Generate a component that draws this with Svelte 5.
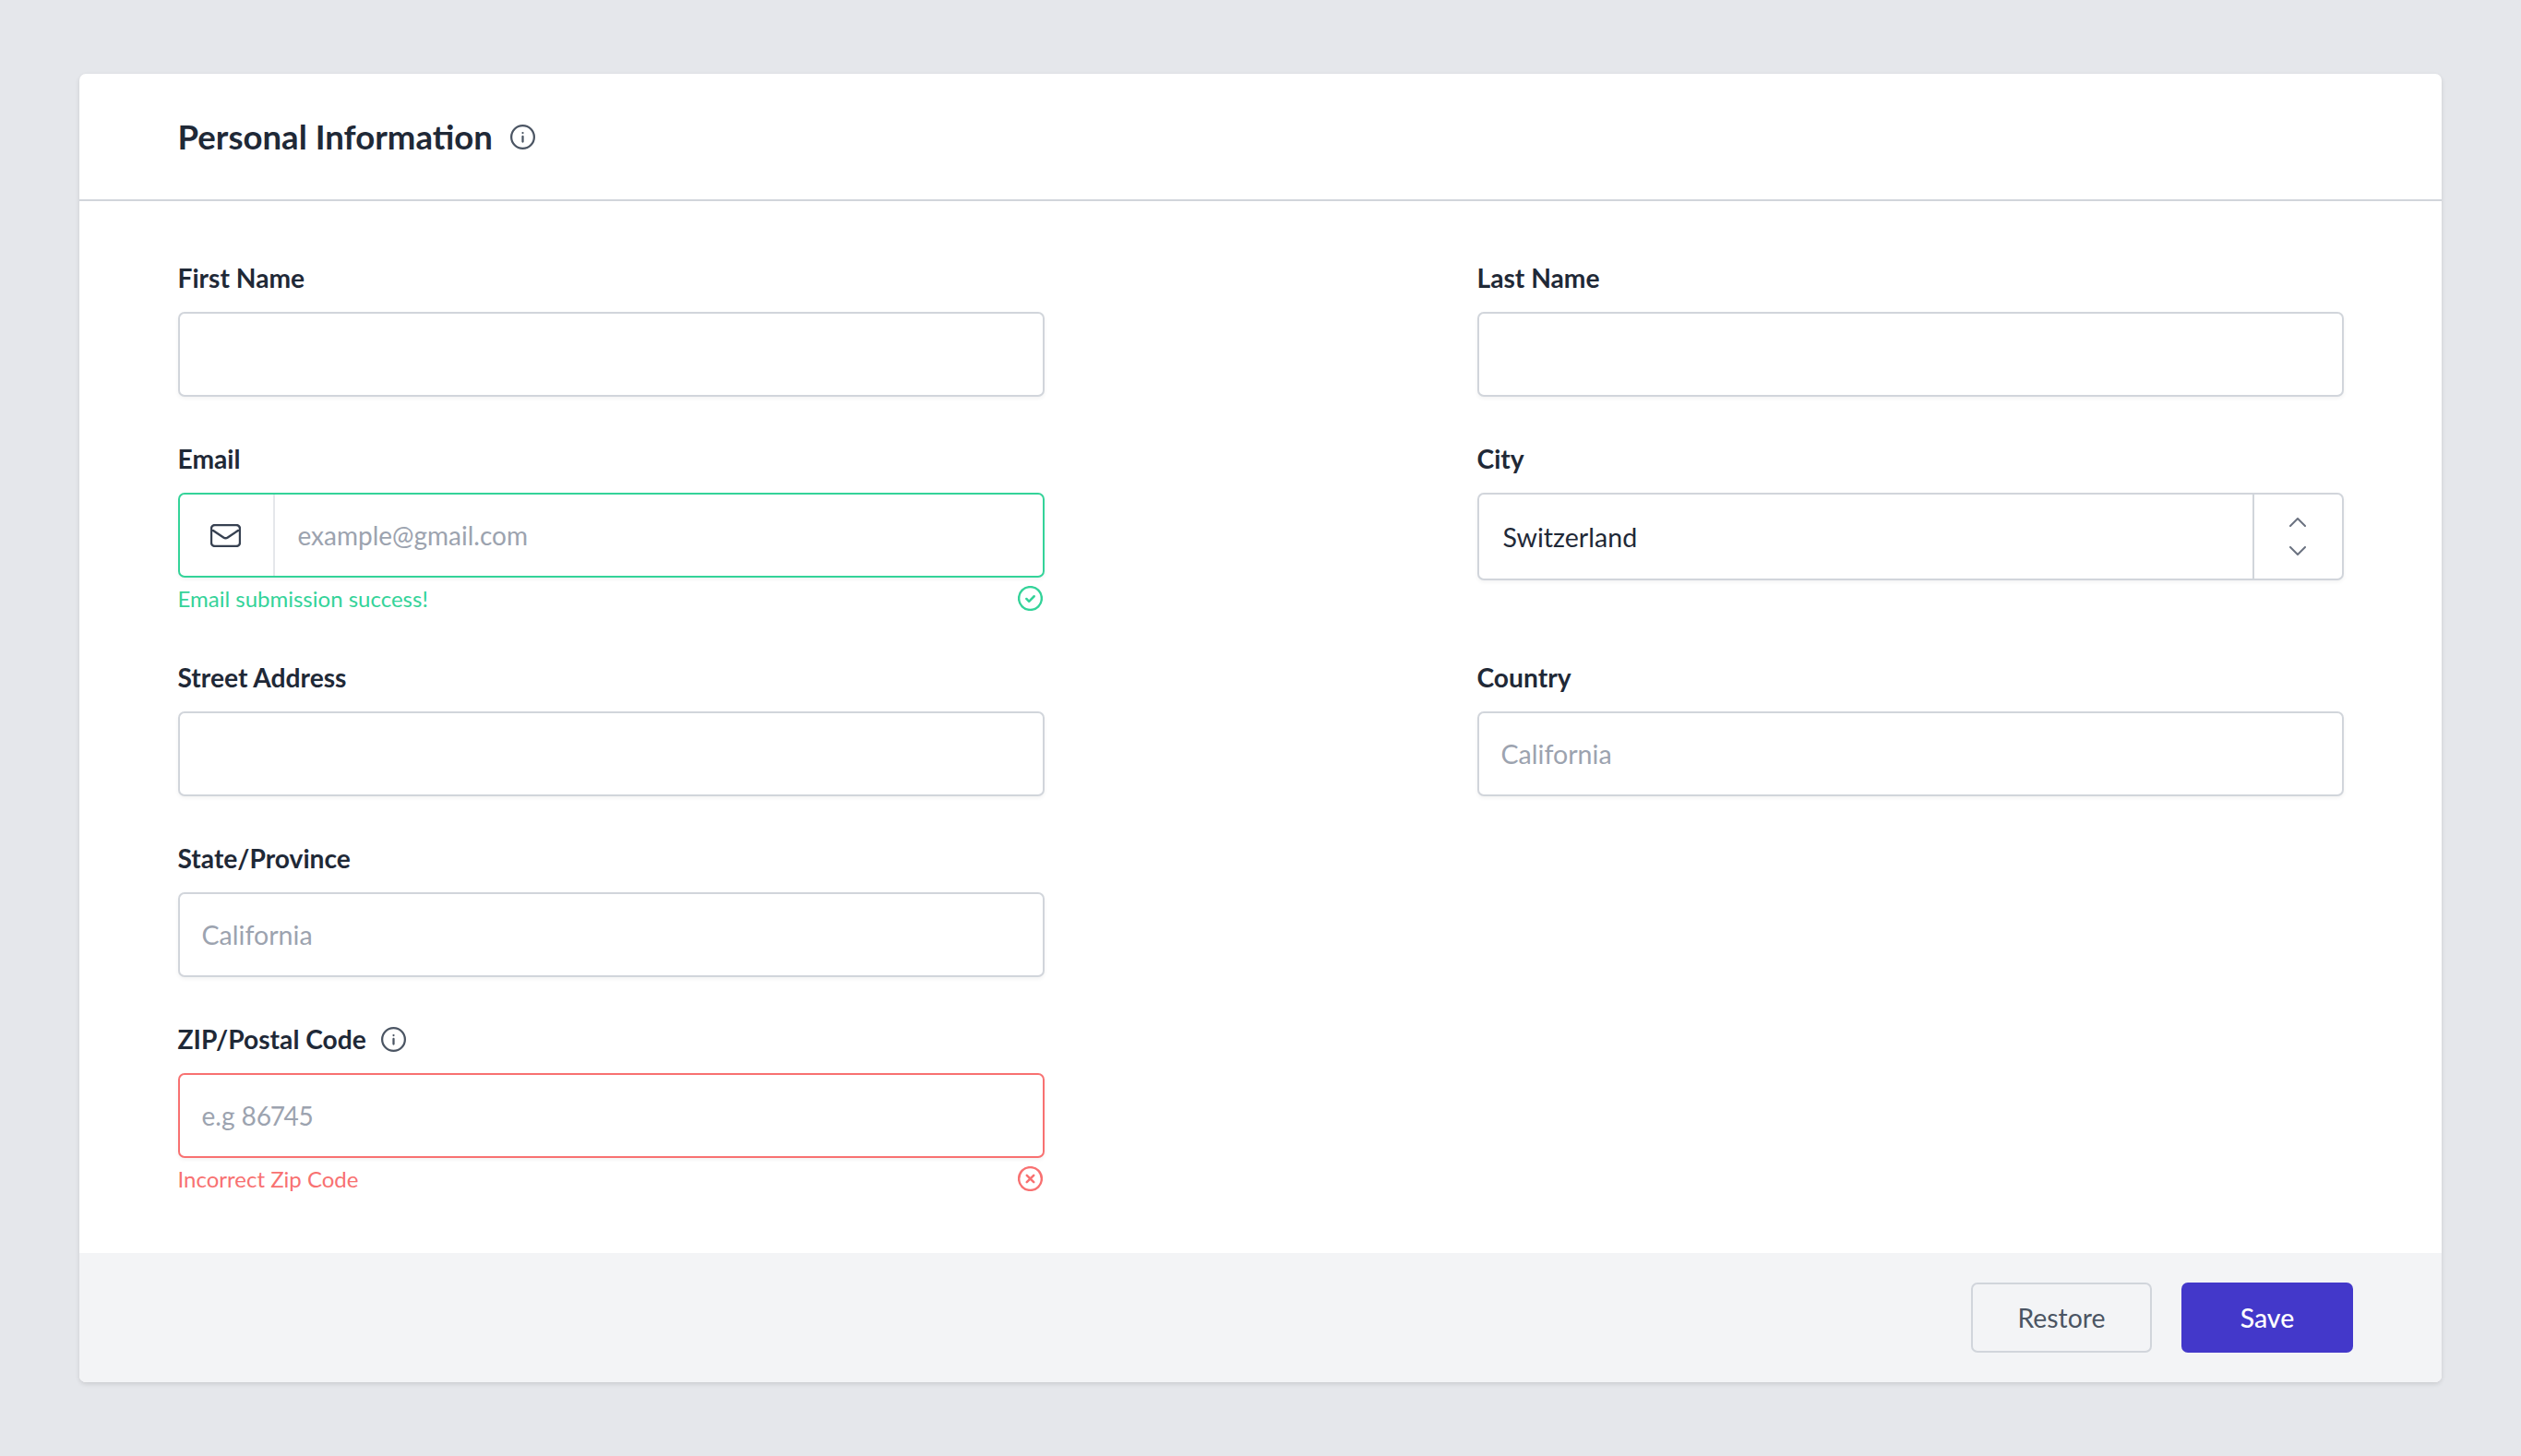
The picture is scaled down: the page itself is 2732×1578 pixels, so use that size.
<script>
  const info = "M12 16.5v-5M12 8h.01M23 12a11 11 0 11-22 0 11 11 0 0122 0z";
</script>

<div class="page">
  <form class="card">
    <header class="head">
      <h1>Personal Information</h1>
      <svg class="info" viewBox="0 0 24 24"><path d={info} /></svg>
    </header>

    <div class="body">
      <div class="field">
        <label for="first">First Name</label>
        <input id="first" class="box" />
      </div>
      <div class="field">
        <label for="last">Last Name</label>
        <input id="last" class="box" />
      </div>

      <div class="field">
        <label for="email">Email</label>
        <div class="box group ok">
          <span class="addon">
            <svg class="mail" viewBox="0 0 33 25"><path d="M3 7l11.2 7.4a4 4 0 004.6 0L30 7M5 24h23a4 4 0 004-4V5a4 4 0 00-4-4H5a4 4 0 00-4 4v15a4 4 0 004 4z" /></svg>
          </span>
          <input id="email" class="mail-input" placeholder="example@gmail.com" />
        </div>
        <div class="msg ok-text">
          <span>Email submission success!</span>
          <svg class="state" viewBox="0 0 24 24"><path d="M8.3 12.4l2.5 2.5 4.9-4.9M23 12a11 11 0 11-22 0 11 11 0 0122 0z" /></svg>
        </div>
      </div>
      <div class="field">
        <label for="city">City</label>
        <div class="box group city">
          <input id="city" value="Switzerland" />
          <span class="stepper">
            <svg class="chev" viewBox="0 0 18 10"><path d="M1 9l8-8 8 8" /></svg>
            <svg class="chev" viewBox="0 0 18 10"><path d="M1 1l8 8 8-8" /></svg>
          </span>
        </div>
      </div>

      <div class="field">
        <label for="street">Street Address</label>
        <input id="street" class="box" />
      </div>
      <div class="field">
        <label for="country">Country</label>
        <input id="country" class="box" placeholder="California" />
      </div>

      <div class="field">
        <label for="state">State/Province</label>
        <input id="state" class="box" placeholder="California" />
      </div>
      <div></div>

      <div class="field">
        <div class="zip-label">
          <label for="zip">ZIP/Postal Code</label>
          <svg class="info small" viewBox="0 0 24 24"><path d={info} /></svg>
        </div>
        <input id="zip" class="box bad zip-input" placeholder="e.g 86745" />
        <div class="msg bad-text">
          <span>Incorrect Zip Code</span>
          <svg class="state" viewBox="0 0 24 24"><path d="M8.7 8.7l6.6 6.6M15.3 8.7l-6.6 6.6M23 12a11 11 0 11-22 0 11 11 0 0122 0z" /></svg>
        </div>
      </div>
    </div>

    <footer class="foot">
      <button type="button" class="btn restore">Restore</button>
      <button type="button" class="btn save">Save</button>
    </footer>
  </form>
</div>

<style>
  :global(body) {
    margin: 0;
    background: #e5e7eb;
    font-family: Lato, "Open Sans", sans-serif;
  }

  .page {
    padding: 80px 86px;
  }

  .card {
    background: #fff;
    border-radius: 7px;
    overflow: hidden;
    height: 1418px;
    display: flex;
    flex-direction: column;
    box-shadow: 0 2px 5px rgba(0, 0, 0, 0.12);
  }

  .head {
    height: 136px;
    padding: 0 106.5px;
    display: flex;
    align-items: center;
    gap: 19px;
    border-bottom: 2px solid #d1d5db;
  }

  h1 {
    margin: 0;
    font-size: 36.6px;
    font-weight: 700;
    color: #1f2937;
  }

  svg {
    display: block;
    fill: none;
    stroke-linecap: round;
    stroke-linejoin: round;
  }

  .info {
    width: 27px;
    height: 27px;
    stroke: #4b5563;
    stroke-width: 2;
  }

  .body {
    flex: 1;
    padding: 65px 107px 0 106.5px;
    display: grid;
    grid-template-columns: 939px 939px;
    grid-auto-rows: min-content;
    column-gap: 469px;
    row-gap: 49px;
  }

  .field {
    display: flex;
    flex-direction: column;
  }

  label {
    display: block;
    height: 36px;
    line-height: 36px;
    font-size: 28.2px;
    font-weight: 700;
    color: #1f2937;
  }

  .field > label,
  .zip-label {
    margin-bottom: 19px;
  }

  .zip-label {
    display: flex;
    align-items: center;
    gap: 16px;
  }

  .small {
    width: 27px;
    height: 27px;
  }

  input {
    font: inherit;
    font-size: 28.6px;
    color: #1f2937;
    border: none;
    outline: none;
    background: transparent;
    padding: 0 24px;
    min-width: 0;
  }

  input::placeholder {
    color: #9ca3af;
    opacity: 1;
  }

  .mail-input {
    font-size: 28px;
    padding-left: 25px;
  }

  .zip-input {
    font-size: 28px;
    font-variant-numeric: proportional-nums;
  }

  .box {
    box-sizing: border-box;
    width: 100%;
    height: 92px;
    border: 2px solid #d1d5db;
    border-radius: 7px;
    background: #fff;
    box-shadow: 0 2px 4px rgba(0, 0, 0, 0.05);
  }

  .group {
    display: flex;
    align-items: stretch;
  }

  .group input {
    flex: 1;
  }

  .ok {
    border-color: #34d399;
  }

  .bad {
    border-color: #f87171;
  }

  .addon {
    width: 103px;
    flex: none;
    box-sizing: border-box;
    display: flex;
    align-items: center;
    justify-content: center;
    padding-right: 2px;
    border-right: 2px solid #e5e7eb;
  }

  .mail {
    width: 33px;
    height: 25px;
    stroke: #374151;
    stroke-width: 2.4;
  }

  .city {
    height: 95px;
  }

  .city input {
    padding-left: 26px;
  }

  .stepper {
    width: 97px;
    flex: none;
    box-sizing: border-box;
    border-left: 2px solid #d1d5db;
    display: flex;
    flex-direction: column;
    align-items: center;
    justify-content: center;
    gap: 21px;
  }

  .chev {
    width: 18px;
    height: 10px;
    stroke: #6b7280;
    stroke-width: 2;
  }

  .msg {
    height: 37px;
    margin-top: 4px;
    display: flex;
    align-items: center;
    justify-content: space-between;
    font-size: 24px;
    padding-right: 2px;
  }

  .state {
    width: 27px;
    height: 27px;
    stroke-width: 2.2;
  }

  .ok-text {
    color: #34d399;
  }

  .ok-text .state {
    stroke: #34d399;
  }

  .bad-text {
    color: #f87171;
  }

  .bad-text .state {
    stroke: #f87171;
  }

  .foot {
    height: 140px;
    background: #f3f4f6;
    display: flex;
    align-items: center;
    justify-content: flex-end;
    gap: 32px;
    padding-right: 96px;
  }

  .btn {
    box-sizing: border-box;
    height: 76px;
    border-radius: 7px;
    font: inherit;
    font-size: 28.4px;
  }

  .restore {
    width: 196px;
    background: transparent;
    border: 2px solid #d1d5db;
    color: #4b5563;
  }

  .save {
    width: 186px;
    background: #4338ca;
    border: none;
    color: #fff;
    font-weight: 500;
  }
</style>
